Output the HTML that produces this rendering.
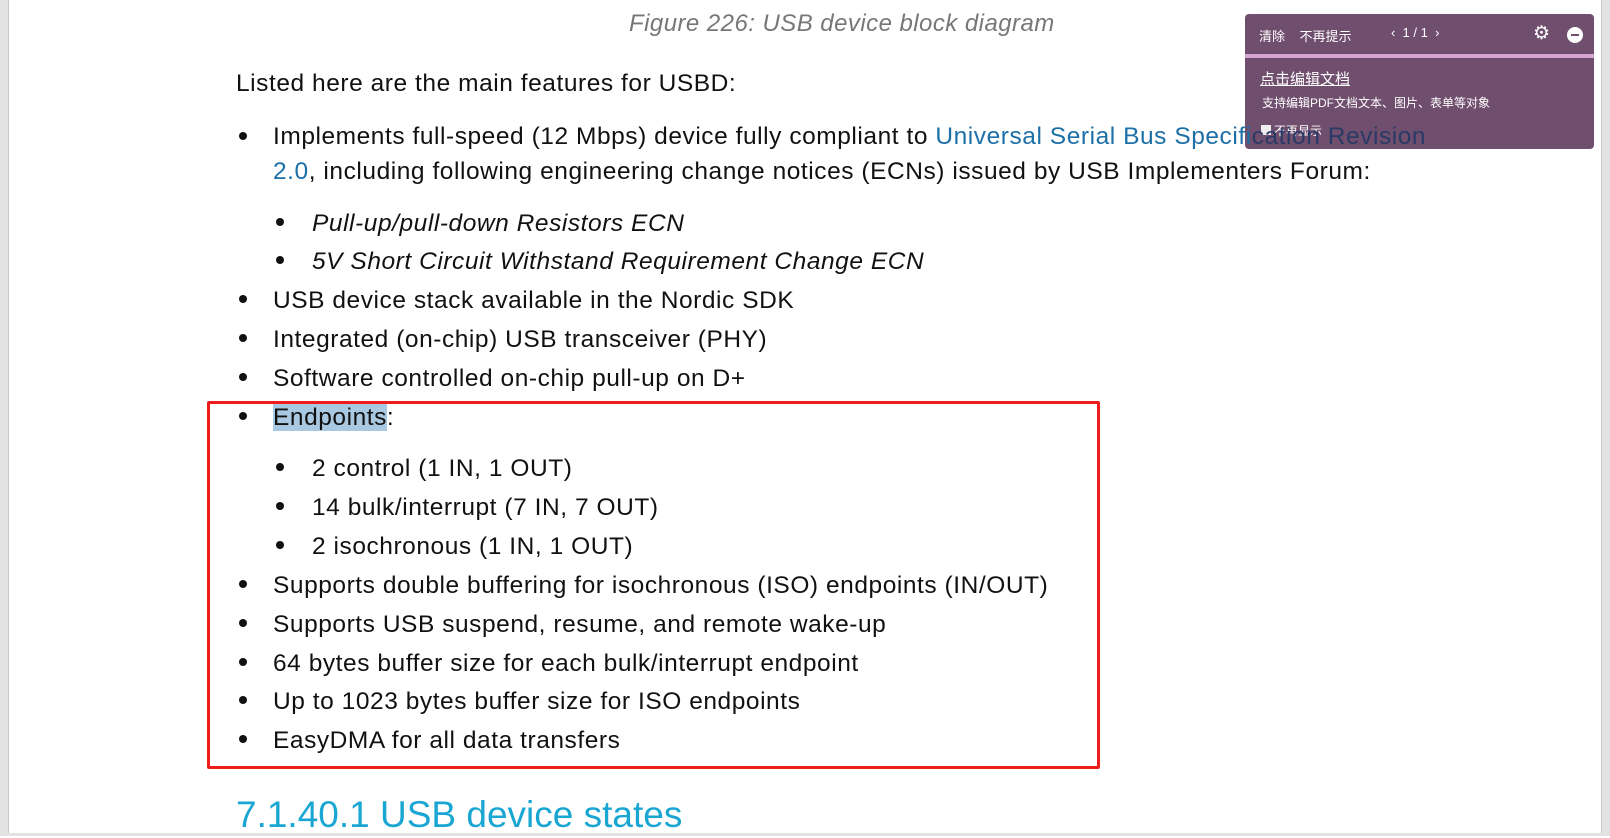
<!DOCTYPE html><html><head><meta charset="utf-8"><style>
body{margin:0;width:1610px;height:836px;overflow:hidden;background:#fff;position:relative;font-family:"Liberation Sans","Noto Sans CJK SC",sans-serif;color:#111}
.t{position:absolute;white-space:nowrap;font-size:24.5px;line-height:28px;letter-spacing:0.55px;z-index:2;margin-top:2px}
.b{position:absolute;width:8px;height:8px;border-radius:50%;background:#111}
.lk{color:#1d6fa8}
</style></head><body>
<div style="position:absolute;left:0;top:0;width:8px;height:836px;background:#e3e3e3;border-right:1px solid #c8c8c8"></div>
<div style="position:absolute;left:1601px;top:0;width:9px;height:836px;background:#e3e3e3;border-left:1px solid #c8c8c8"></div>
<div style="position:absolute;left:0;top:833px;width:1610px;height:3px;background:#e3e3e3"></div>
<div class="t" style="left:629px;top:8px;font-style:italic;color:#777;font-size:24px;letter-spacing:0.45px">Figure 226: USB device block diagram</div>
<div class="t" style="left:236px;top:68px">Listed here are the main features for USBD:</div>
<div class="b" style="left:239px;top:132px"></div><div class="t" style="left:273px;top:121px">Implements full-speed (12 Mbps) device fully compliant to <span class="lk">Universal Serial Bus Specifi</span><span style="color:#2a3a66">cation Revision</span></div>
<div class="t" style="left:273px;top:156px"><span class="lk">2.0</span>, including following engineering change notices (ECNs) issued by USB Implementers Forum:</div>
<div class="b" style="left:276px;top:218px"></div><div class="t" style="left:312px;top:208px;font-style:italic">Pull-up/pull-down Resistors ECN</div>
<div class="b" style="left:276px;top:256px"></div><div class="t" style="left:312px;top:246px;font-style:italic">5V Short Circuit Withstand Requirement Change ECN</div>
<div class="b" style="left:239px;top:295px"></div><div class="t" style="left:273px;top:285px">USB device stack available in the Nordic SDK</div>
<div class="b" style="left:239px;top:334px"></div><div class="t" style="left:273px;top:324px">Integrated (on-chip) USB transceiver (PHY)</div>
<div class="b" style="left:239px;top:373px"></div><div class="t" style="left:273px;top:363px">Software controlled on-chip pull-up on D+</div>
<div class="b" style="left:239px;top:412px"></div><div class="t" style="left:273px;top:402px"><span style="background:#a9c9e2">Endpoints</span>:</div>
<div class="b" style="left:276px;top:463px"></div><div class="t" style="left:312px;top:453px">2 control (1 IN, 1 OUT)</div>
<div class="b" style="left:276px;top:502px"></div><div class="t" style="left:312px;top:492px">14 bulk/interrupt (7 IN, 7 OUT)</div>
<div class="b" style="left:276px;top:541px"></div><div class="t" style="left:312px;top:531px">2 isochronous (1 IN, 1 OUT)</div>
<div class="b" style="left:239px;top:580px"></div><div class="t" style="left:273px;top:570px">Supports double buffering for isochronous (ISO) endpoints (IN/OUT)</div>
<div class="b" style="left:239px;top:619px"></div><div class="t" style="left:273px;top:609px">Supports USB suspend, resume, and remote wake-up</div>
<div class="b" style="left:239px;top:658px"></div><div class="t" style="left:273px;top:648px">64 bytes buffer size for each bulk/interrupt endpoint</div>
<div class="b" style="left:239px;top:696px"></div><div class="t" style="left:273px;top:686px">Up to 1023 bytes buffer size for ISO endpoints</div>
<div class="b" style="left:239px;top:735px"></div><div class="t" style="left:273px;top:725px">EasyDMA for all data transfers</div>
<div style="position:absolute;left:207px;top:401px;width:887px;height:362px;border:3px solid #f01c1c;border-radius:2px"></div>
<div class="t" style="left:236px;top:790px;font-size:37px;line-height:46px;letter-spacing:0;color:#1aa6d2">7.1.40.1 USB device states</div>
<div style="position:absolute;left:1245px;top:14px;width:349px;height:135px;background:#704e6e;border-radius:4px;color:#fff;font-size:13px">
<div style="position:absolute;left:14px;top:12px">清除&nbsp;&nbsp;&nbsp;&nbsp;不再提示</div>
<div style="position:absolute;left:146px;top:11px;font-size:13px">‹&nbsp; 1 / 1 &nbsp;›</div>
<div style="position:absolute;left:288px;top:8px;font-size:19px">⚙</div>
<div style="position:absolute;left:322px;top:13px;width:16px;height:16px;border-radius:50%;background:#fff"><div style="position:absolute;left:4px;top:7px;width:8px;height:2px;background:#704e6e"></div></div>
<div style="position:absolute;left:0;top:40px;width:349px;height:4px;background:#d4a6d0"></div>
<div style="position:absolute;left:15px;top:54px;font-size:15px;text-decoration:underline">点击编辑文档</div>
<div style="position:absolute;left:17px;top:80px;font-size:12px">支持编辑PDF文档文本、图片、表单等对象</div>
<div style="position:absolute;left:16px;top:111px;width:10px;height:10px;background:#eee"></div>
<div style="position:absolute;left:29px;top:108px;font-size:12px">不再显示</div>
</div>
</body></html>
